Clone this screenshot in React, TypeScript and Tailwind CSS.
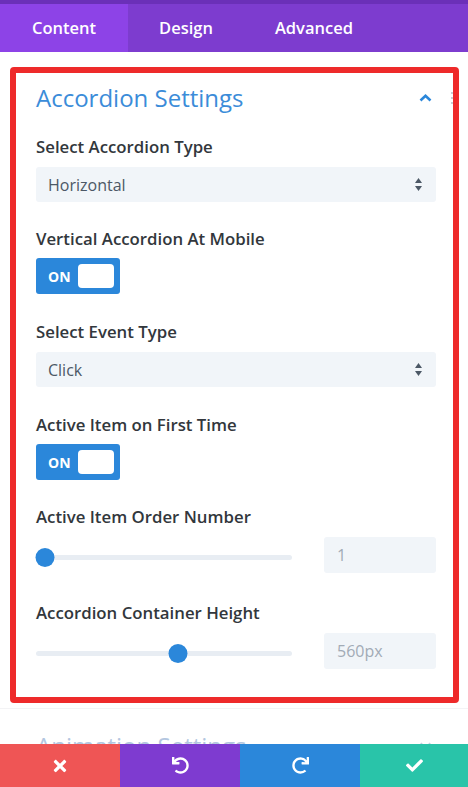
import { FaCheck, FaRedo, FaTimes, FaUndo } from 'react-icons/fa'

function Label({ children }: { children: string }) {
  return (
    <div className="h-[20px] text-[16.8px] leading-[20px] font-semibold text-[#32373c]">
      {children}
    </div>
  )
}

function SelectBox({ value }: { value: string }) {
  return (
    <div className="mt-[10px] flex h-[35px] w-[400px] items-center justify-between rounded-[3px] bg-[#f1f5f9] pl-[12px] pr-[14px]">
      <span className="text-[16px] text-[#4c5866]">{value}</span>
      <svg width="7" height="13" viewBox="0 0 7 13" className="text-[#4c5866]">
        <path d="M3.5 0 L7 5 L0 5 Z" fill="currentColor" />
        <path d="M3.5 13 L7 8 L0 8 Z" fill="currentColor" />
      </svg>
    </div>
  )
}

function Toggle() {
  return (
    <div className="mt-[9px] flex h-[36px] w-[84px] items-center rounded-[3px] bg-[#2b87da] pl-[12px] pr-[6px]">
      <span className="text-[14px] font-bold text-white">ON</span>
      <div className="ml-auto h-[24px] w-[36px] rounded-[4px] bg-white" />
    </div>
  )
}

function Slider({ percent, value }: { percent: number; value: string }) {
  return (
    <div className="mt-[10px] flex items-center gap-[32px]">
      <div className="relative h-[35px] w-[256px]">
        <div className="absolute left-0 right-0 top-[17px] h-[5px] rounded-full bg-[#e8edf3]" />
        <div
          className="absolute top-[10px] h-[19px] w-[19px] -translate-x-1/2 rounded-full bg-[#2b87da]"
          style={{ left: `${9 + percent * 2.38}px` }}
        />
      </div>
      <div className="flex h-[36px] w-[112px] items-center rounded-[3px] bg-[#f1f5f9] pl-[13px] text-[16px] text-[#a2abb6]">
        {value}
      </div>
    </div>
  )
}

export default function App() {
  return (
    <div className="flex h-[787px] w-[468px] flex-col overflow-hidden bg-white font-['Open_Sans',sans-serif]">
      <div className="flex-1 overflow-hidden">
        <div className="h-[4px] bg-[#6b30b8]" />
        <div className="flex h-[48px] bg-[#7d3ccf] text-[16.5px] font-semibold text-white">
          <div className="flex items-center bg-[#8d43e7] px-[32px]">Content</div>
          <div className="flex items-center px-[31px]">Design</div>
          <div className="flex items-center px-[31px]">Advanced</div>
        </div>

        <div className="ml-[10px] mt-[15px] w-[449px] rounded-[4px] border-[6px] border-[#ee2a2a] pb-[28px] pl-[20px]">
          <div className="flex h-[30px] items-center mt-[10px]">
            <span className="text-[24px] leading-[30px] text-[#3b8cd9]">Accordion Settings</span>
            <svg width="13" height="8" viewBox="0 0 13 8" className="ml-auto mr-[19px]">
              <path d="M1.5 6.5 L6.5 1.8 L11.5 6.5" fill="none" stroke="#2b87da" strokeWidth="2.6" />
            </svg>
            <div className="flex w-[2px] flex-col gap-[3px]">
              <span className="h-[2px] w-[2px] bg-[#c9ccd3]" />
              <span className="h-[2px] w-[2px] bg-[#c9ccd3]" />
              <span className="h-[2px] w-[2px] bg-[#c9ccd3]" />
            </div>
          </div>

          <div className="mt-[24px]">
            <Label>Select Accordion Type</Label>
            <SelectBox value="Horizontal" />
          </div>

          <div className="mt-[27px]">
            <Label>Vertical Accordion At Mobile</Label>
            <Toggle />
          </div>

          <div className="mt-[28px]">
            <Label>Select Event Type</Label>
            <SelectBox value="Click" />
          </div>

          <div className="mt-[28px]">
            <Label>Active Item on First Time</Label>
            <Toggle />
          </div>

          <div className="mt-[27px]">
            <Label>Active Item Order Number</Label>
            <Slider percent={0} value="1" />
          </div>

          <div className="mt-[30px]">
            <Label>Accordion Container Height</Label>
            <Slider percent={56} value="560px" />
          </div>
        </div>

        <div className="mt-[5px] h-px bg-[#f3f3f5]" />
        <div className="flex items-center pl-[36px] pr-[36px] pt-[22px]">
          <span className="text-[24px] leading-[30px] text-[#b3c6e0]">Animation Settings</span>
          <svg width="13" height="8" viewBox="0 0 13 8" className="ml-auto">
            <path d="M1.5 1.5 L6.5 6.2 L11.5 1.5" fill="none" stroke="#c3cfe0" strokeWidth="2.6" />
          </svg>
        </div>
      </div>

      <div className="flex h-[43px] text-white">
        <button className="flex w-[120px] items-center justify-center bg-[#ef5555]">
          <FaTimes size={18} />
        </button>
        <button className="flex w-[120px] items-center justify-center bg-[#7e3bd0]">
          <FaUndo size={17} />
        </button>
        <button className="flex w-[120px] items-center justify-center bg-[#2b87da]">
          <FaRedo size={17} />
        </button>
        <button className="flex flex-1 items-center justify-center bg-[#29c4a9]">
          <FaCheck size={17} />
        </button>
      </div>
    </div>
  )
}
